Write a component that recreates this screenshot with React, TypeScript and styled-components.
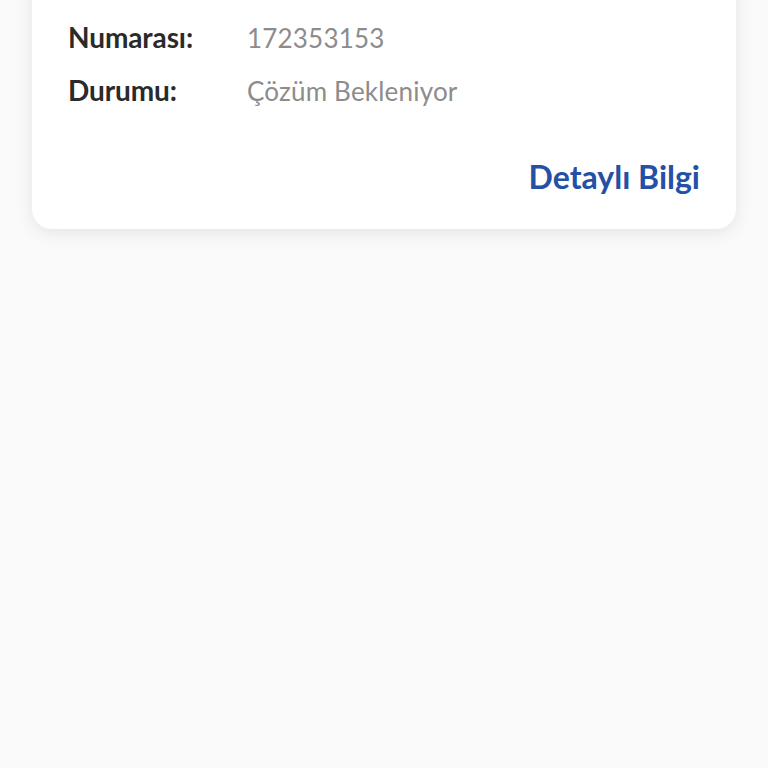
import React from 'react';
import styled, { createGlobalStyle } from 'styled-components';

const GlobalStyle = createGlobalStyle`
  html, body {
    margin: 0;
    padding: 0;
    background: #fafafa;
    font-family: Lato, "Noto Sans", sans-serif;
  }
  #root {
    min-height: 100vh;
  }
`;

const Page = styled.div`
  min-height: 100vh;
  background: #fafafa;
  padding: 0 32px;
  box-sizing: border-box;
  overflow: hidden;
`;

const Card = styled.div`
  margin-top: -40px;
  background: #ffffff;
  border-radius: 20px;
  box-shadow: 0 4px 18px rgba(0, 0, 0, 0.09);
  padding: 60px 36px 33px 36px;
  display: flex;
  flex-direction: column;
`;

const Rows = styled.div`
  display: flex;
  flex-direction: column;
  gap: 18px;
`;

const Row = styled.div`
  display: grid;
  grid-template-columns: 179px 1fr;
  align-items: baseline;
`;

const Label = styled.span`
  font-size: 28px;
  line-height: 34px;
  font-weight: 700;
  color: #2a2a2a;
  letter-spacing: -0.1px;
`;

const Value = styled.span`
  font-size: 26px;
  line-height: 34px;
  font-weight: 400;
  color: #8c8c8c;
  letter-spacing: 0.2px;
`;

const Footer = styled.div`
  display: flex;
  justify-content: flex-end;
  margin-top: 50px;
`;

const DetailLink = styled.a`
  font-size: 32px;
  line-height: 38px;
  font-weight: 700;
  color: #2450a6;
  text-decoration: none;
  cursor: pointer;
`;

const rows = [
  { label: 'Numarası:', value: '172353153' },
  { label: 'Durumu:', value: 'Çözüm Bekleniyor' },
];

export default function App() {
  return (
    <>
      <GlobalStyle />
      <Page>
        <Card>
          <Rows>
            {rows.map((r) => (
              <Row key={r.label}>
                <Label>{r.label}</Label>
                <Value>{r.value}</Value>
              </Row>
            ))}
          </Rows>
          <Footer>
            <DetailLink>Detaylı Bilgi</DetailLink>
          </Footer>
        </Card>
      </Page>
    </>
  );
}
